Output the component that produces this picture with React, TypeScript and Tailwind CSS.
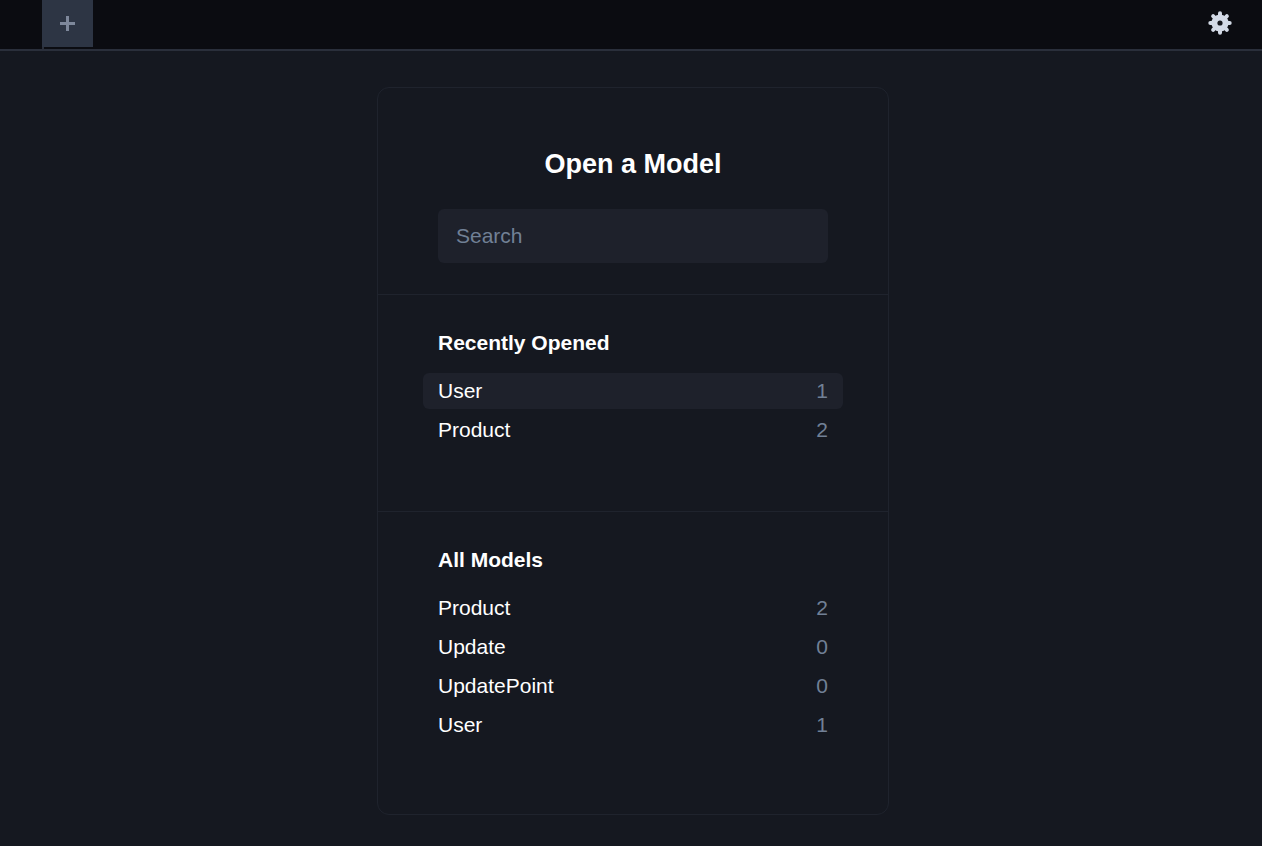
const recent = [
  { name: 'User', count: 1, active: true },
  { name: 'Product', count: 2 },
]

const all = [
  { name: 'Product', count: 2 },
  { name: 'Update', count: 0 },
  { name: 'UpdatePoint', count: 0 },
  { name: 'User', count: 1 },
]

const teeth = [0, 45, 90, 135, 180, 225, 270, 315]

function Row({ name, count, active }: { name: string; count: number; active?: boolean }) {
  return (
    <div className={`flex h-9 items-center justify-between rounded-md px-[15px] pb-[2px] ${active ? 'bg-[#1e212b]' : ''}`}>
      <span className="text-[21px] leading-none text-white">{name}</span>
      <span className="text-[21px] leading-none text-[#718096]">{count}</span>
    </div>
  )
}

export default function App() {
  return (
    <div className="h-[846px] overflow-hidden bg-[#151820] font-['Liberation_Sans',Arial,sans-serif]">
      <div className="flex h-[51px] items-start justify-between border-b-2 border-[#2a2f3b] bg-[#0b0c11]">
        <div className="ml-[42px] flex h-[49px] w-[51px] flex-col bg-[#2a2f3b]">
          <div className="flex h-[47px] items-center justify-center bg-[#2d3544] pr-[1px] pb-[1px] text-[#7e889b]">
            <svg width="15" height="15" viewBox="0 0 15 15" fill="none" stroke="currentColor" strokeWidth="3">
              <path d="M7.5 0v15M0 7.5h15" />
            </svg>
          </div>
          <div className="ml-[2px] h-[2px] bg-[#0b0c11]" />
        </div>
        <div className="mt-[11px] mr-[30px] text-[#d3dae6]">
          <svg width="24" height="24" viewBox="0 0 24 24" fill="currentColor">
            <circle cx="12" cy="12" r="8.6" />
            {teeth.map((a) => (
              <rect key={a} x="10" y="0.3" width="4" height="6" rx="2" transform={`rotate(${a} 12 12)`} />
            ))}
            <circle cx="12" cy="12" r="2.6" fill="#14161c" />
          </svg>
        </div>
      </div>

      <div className="flex justify-center pt-[36px] pl-[4px]">
        <div className="h-[728px] w-[512px] rounded-xl border border-[#1f232d] bg-[#151820]">
          <div className="flex h-[207px] flex-col items-center border-b border-[#1f232d] px-[60px] pt-[61px]">
            <h1 className="text-[27px] leading-[30px] font-bold text-white">Open a Model</h1>
            <input
              placeholder="Search"
              className="mt-[30px] h-[54px] w-full rounded-md bg-[#1e212b] px-[18px] text-[21px] text-white outline-none placeholder:text-[#718096]"
            />
          </div>

          <div className="h-[217px] border-b border-[#1f232d] px-[45px] pt-[36px]">
            <h2 className="px-[15px] text-[21px] leading-6 font-bold text-white">Recently Opened</h2>
            <div className="mt-[18px] flex flex-col gap-[3px]">
              {recent.map((r) => (
                <Row key={r.name} {...r} />
              ))}
            </div>
          </div>

          <div className="px-[45px] pt-[36px]">
            <h2 className="px-[15px] text-[21px] leading-6 font-bold text-white">All Models</h2>
            <div className="mt-[18px] flex flex-col gap-[3px]">
              {all.map((r) => (
                <Row key={r.name} {...r} />
              ))}
            </div>
          </div>
        </div>
      </div>
    </div>
  )
}
